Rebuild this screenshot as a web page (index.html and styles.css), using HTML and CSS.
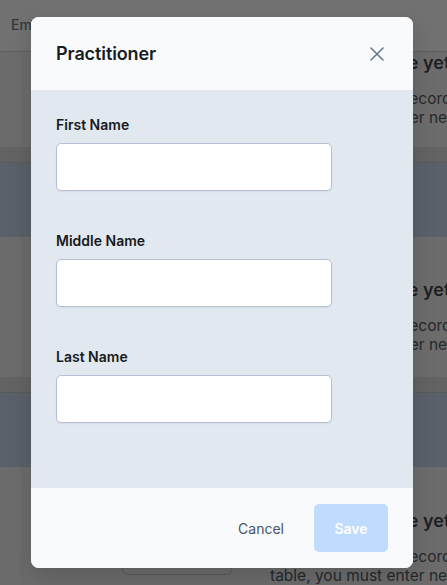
FILE: index.html
```
<!DOCTYPE html>
<html lang="en">
<head>
<meta charset="utf-8">
<title>Practitioner</title>
<link rel="stylesheet" href="styles.css">
</head>
<body>
<div class="page">
  <div class="topbar"><span class="tab">Email</span></div>
  <section class="empty first">
    <div class="left"></div>
    <div class="copy">
      <h2>No records here yet</h2>
      <p>To create the first record to this table, you must enter new data.</p>
    </div>
  </section>
  <div class="band"></div>
  <div class="slate"></div>
  <section class="empty">
    <div class="left"></div>
    <div class="copy">
      <h2>No records here yet</h2>
      <p>To create the first record to this table, you must enter new data.</p>
    </div>
  </section>
  <div class="band"></div>
  <div class="slate"></div>
  <section class="empty last">
    <div class="left"><div class="ghost-btn"></div></div>
    <div class="copy">
      <h2>No records here yet</h2>
      <p>To create the first record to this table, you must enter new data.</p>
    </div>
  </section>
</div>

<div class="modal" role="dialog" aria-labelledby="modal-title">
  <header class="modal-header">
    <h1 id="modal-title">Practitioner</h1>
    <button class="close" aria-label="Close">
      <svg width="14" height="14" viewBox="0 0 14 14" fill="none" stroke="#64748b" stroke-width="1.5" stroke-linecap="round"><path d="M1 1L13 13M13 1L1 13"/></svg>
    </button>
  </header>
  <div class="modal-body">
    <label class="field">
      <span class="label">First Name</span>
      <input type="text" class="input">
    </label>
    <label class="field">
      <span class="label">Middle Name</span>
      <input type="text" class="input">
    </label>
    <label class="field">
      <span class="label">Last Name</span>
      <input type="text" class="input">
    </label>
  </div>
  <footer class="modal-footer">
    <button class="btn-cancel">Cancel</button>
    <button class="btn-save" disabled>Save</button>
  </footer>
</div>
</body>
</html>
```

FILE: styles.css
```
* { box-sizing: border-box; }
html, body { margin: 0; padding: 0; }
body {
  width: 447px;
  height: 585px;
  overflow: hidden;
  font-family: Inter, "Noto Sans", sans-serif;
  background: #6c6c6c;
  position: relative;
}
.page { display: flex; flex-direction: column; width: 447px; overflow: hidden; }
.topbar {
  height: 52px;
  background: #717171;
  border-bottom: 1px solid #5f5f5f;
  display: flex;
  align-items: center;
  padding-left: 11px;
  padding-bottom: 2px;
}
.tab { font-size: 14px; font-weight: 500; color: #33373c; }
.empty {
  display: flex;
  background: linear-gradient(to right, transparent 22px, rgba(0,0,0,0.05) 22px, rgba(0,0,0,0.05) 23px, transparent 23px), #6c6c6c;
  height: 140px;
  padding-top: 42px;
}
.empty.first { height: 95px; padding-top: 0; }
.empty.last { height: 118px; padding-top: 43px; }
.left { width: 270px; flex: none; position: relative; }
.ghost-btn {
  position: absolute;
  left: 122px;
  top: 25px;
  width: 110px;
  height: 40px;
  border: 1px solid #5a5a5a;
  border-radius: 6px;
}
.copy { flex: none; width: 260px; }
.copy h2 {
  margin: 0 0 0 9px;
  font-size: 18px;
  line-height: 22px;
  font-weight: 600;
  color: #1d1f22;
}
.copy p {
  margin: 15px 0 0;
  font-size: 15.5px;
  line-height: 19px;
  color: #26282b;
}
.band { height: 16px; background: #636363; border-bottom: 1px solid #5a5a5a; }
.slate { height: 74px; background: linear-gradient(to right, transparent 22px, rgba(0,0,0,0.04) 22px, rgba(0,0,0,0.04) 23px, transparent 23px), #5b616a; }

.modal {
  position: absolute;
  left: 31px;
  top: 17px;
  width: 382px;
  height: 551px;
  border-radius: 8px;
  overflow: hidden;
  display: flex;
  flex-direction: column;
  background: #f8fafc;
  box-shadow: 0 10px 25px rgba(0,0,0,0.15);
}
.modal-header {
  height: 73px;
  flex: none;
  display: flex;
  align-items: center;
  justify-content: space-between;
  padding: 0 29px 0 25px;
  background: #f8fafc;
}
.modal-header h1 {
  margin: 0;
  font-size: 18px;
  font-weight: 600;
  color: #1a1c1f;
  letter-spacing: -0.1px;
}
.close {
  border: 0;
  background: none;
  padding: 0;
  width: 14px;
  height: 14px;
  display: flex;
}
.modal-body {
  flex: 1;
  background: #e2e8f0;
  padding: 25px 25px 0;
  display: flex;
  flex-direction: column;
  gap: 40px;
}
.field { display: flex; flex-direction: column; gap: 8px; }
.label {
  font-size: 14px;
  line-height: 20px;
  font-weight: 600;
  color: #18191c;
}
.input {
  width: 276px;
  height: 48px;
  background: #ffffff;
  border: 1px solid #b4c1d4;
  border-radius: 5px;
  box-shadow: 0 1px 2px rgba(15,23,42,0.06);
  margin: 0;
  font: inherit;
}
.modal-footer {
  height: 80px;
  flex: none;
  display: flex;
  align-items: center;
  justify-content: flex-end;
  gap: 14px;
  padding: 0 25px;
  background: #f8fafc;
}
.btn-cancel {
  border: 0;
  background: none;
  padding: 0 16px;
  height: 48px;
  font-family: inherit;
  font-size: 14px;
  color: #475569;
}
.btn-save {
  border: 0;
  width: 74px;
  height: 48px;
  border-radius: 5px;
  background: #bfdbfe;
  color: #ffffff;
  font-family: inherit;
  font-size: 14px;
  font-weight: 600;
}
```
